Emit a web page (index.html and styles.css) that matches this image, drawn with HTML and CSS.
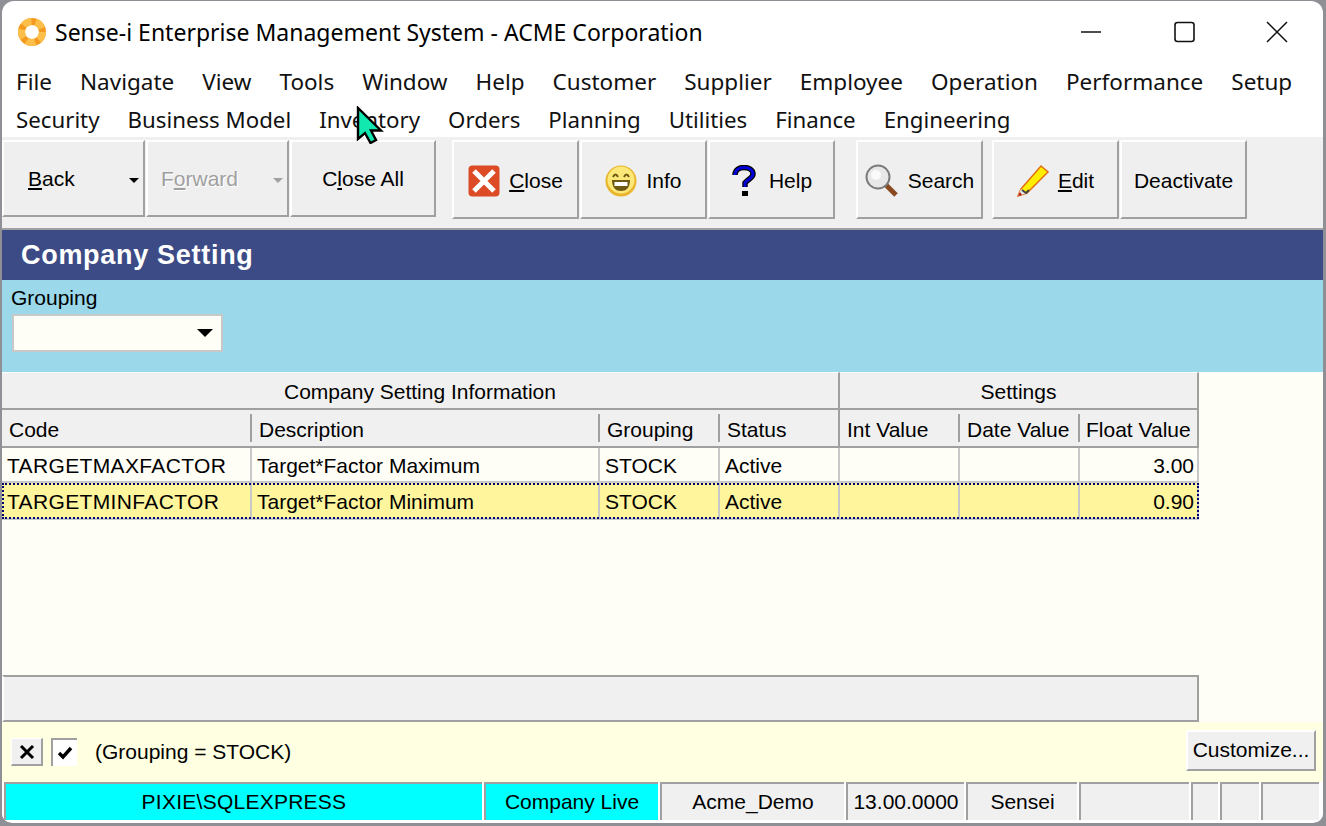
FILE: index.html
```html
<!DOCTYPE html>
<html>
<head>
    <title>Company Setting</title>
    <link rel="stylesheet" href="styles.css">
</head>
<body>
    <div class="window">
        <div class="titlebar">
            <svg class="logo" width="32" height="32" viewBox="0 0 32 32">
                <circle cx="16" cy="16" r="10.5" fill="none" stroke="#f39a1f" stroke-width="7"/>
                <circle cx="16" cy="16" r="10.5" fill="none" stroke="#fcc04a" stroke-width="7" stroke-dasharray="9 4.2"/>
            </svg>
            <span class="title">Sense-i Enterprise Management System - ACME Corporation</span>
            <div class="winbtns">
                <svg width="24" height="24" viewBox="0 0 24 24"><path d="M2 12H22" stroke="#111" stroke-width="1.5"/></svg>
                <svg width="24" height="24" viewBox="0 0 24 24"><rect x="3" y="2.5" width="19" height="19" rx="2.5" fill="none" stroke="#111" stroke-width="1.6"/></svg>
                <svg width="24" height="24" viewBox="0 0 24 24"><path d="M2 2L22 22M22 2L2 22" stroke="#111" stroke-width="1.5"/></svg>
            </div>
        </div>

        <div class="menubar">
            <div class="menurow">
                <span>File</span><span>Navigate</span><span>View</span><span>Tools</span><span>Window</span><span>Help</span><span>Customer</span><span>Supplier</span><span>Employee</span><span>Operation</span><span>Performance</span><span>Setup</span>
            </div>
            <div class="menurow menurow-two">
                <span>Security</span><span>Business Model</span><span>Inventory</span><span>Orders</span><span>Planning</span><span>Utilities</span><span>Finance</span><span>Engineering</span>
            </div>
        </div>

        <div class="toolbar">
            <div class="tbgroup tbgroup-nav">
                <div class="tbbtn drop"><span><u>B</u>ack</span><i class="arrow"></i></div>
                <div class="tbbtn drop disabled"><span>F<u>o</u>rward</span><i class="arrow"></i></div>
                <div class="tbbtn closeall"><span>C<u>l</u>ose All</span></div>
            </div>
            <div class="tbgroup tbgroup-a">
                <div class="tbbtn">
                    <svg width="32" height="32" viewBox="0 0 32 32">
                        <rect x="0.5" y="0.5" width="31" height="31" rx="4" fill="#dd4a26"/>
                        <path d="M6 6L26 26M26 6L6 26" stroke="#fff" stroke-width="5"/>
                    </svg>
                    <span><u>C</u>lose</span>
                </div>
                <div class="tbbtn">
                    <svg width="32" height="32" viewBox="0 0 32 32">
                        <circle cx="16" cy="16" r="15.5" fill="#e8b52c"/>
                        <circle cx="16" cy="15" r="13.5" fill="#fbe878"/>
                        <path d="M8 12Q10.5 7 13 12M19 12Q21.5 7 24 12" fill="none" stroke="#6e5a12" stroke-width="2"/>
                        <path d="M7 15H25C25 23 21 26 16 26C11 26 7 23 7 15Z" fill="#6e5a12"/>
                        <path d="M9.5 17H22.5V21H9.5Z" fill="#fff"/>
                    </svg>
                    <span>Info</span>
                </div>
                <div class="tbbtn">
                    <svg width="29" height="32" viewBox="0 0 29 32">
                        <path d="M4 10C4 5 8 2.5 13 2.5C18 2.5 22 5 22 9C22 13 17 14 14 18V22" fill="none" stroke="#000" stroke-width="5.5"/>
                        <path d="M4 10C4 5 8 2.5 13 2.5C18 2.5 22 5 22 9C22 13 17 14 14 18V22" fill="none" stroke="#0000d8" stroke-width="3"/>
                        <rect x="11" y="26" width="6" height="5" fill="#000"/>
                    </svg>
                    <span>Help</span>
                </div>
            </div>
            <div class="tbgroup tbgroup-b">
                <div class="tbbtn">
                    <svg width="34" height="34" viewBox="0 0 34 34">
                        <path d="M21 21L31 31" stroke="#8a4a20" stroke-width="5"/>
                        <circle cx="13" cy="13" r="11.5" fill="#e8e8e8" stroke="#7c7c7c" stroke-width="2"/>
                        <circle cx="11" cy="11" r="5" fill="#fafafa"/>
                    </svg>
                    <span>Search</span>
                </div>
            </div>
            <div class="tbgroup tbgroup-c">
                <div class="tbbtn">
                    <svg width="32" height="34" viewBox="0 0 32 34">
                        <path d="M1 32L4 25L24 2L31 8L10 29Z" fill="#ffee00" stroke="#e07010" stroke-width="1.5"/>
                        <path d="M1 32L4 25L10 29Z" fill="#e8e8e8"/>
                        <path d="M1 32L3 28L5 31Z" fill="#b01010"/>
                        <path d="M5 26L9 29L12 26" fill="none" stroke="#444" stroke-width="2"/>
                    </svg>
                    <span><u>E</u>dit</span>
                </div>
                <div class="tbbtn"><span>Deactivate</span></div>
            </div>
        </div>

        <div class="heading">Company Setting</div>

        <div class="filter">
            <label class="filter-label">Grouping</label>
            <div class="combo"><i class="arrow big"></i></div>
        </div>

        <div class="content">
            <div class="grid">
                <div class="bands">
                    <div class="band band-info">Company Setting Information</div>
                    <div class="band">Settings</div>
                </div>
                <div class="row head">
                    <div class="cell">Code</div>
                    <div class="cell">Description</div>
                    <div class="cell">Grouping</div>
                    <div class="cell group-end">Status</div>
                    <div class="cell">Int Value</div>
                    <div class="cell">Date Value</div>
                    <div class="cell group-end last">Float Value</div>
                </div>
                <div class="row">
                    <div class="cell code">TARGETMAXFACTOR</div>
                    <div class="cell">Target*Factor Maximum</div>
                    <div class="cell">STOCK</div>
                    <div class="cell">Active</div>
                    <div class="cell"></div>
                    <div class="cell"></div>
                    <div class="cell num">3.00</div>
                </div>
                <div class="row selected">
                    <div class="cell code">TARGETMINFACTOR</div>
                    <div class="cell">Target*Factor Minimum</div>
                    <div class="cell">STOCK</div>
                    <div class="cell">Active</div>
                    <div class="cell"></div>
                    <div class="cell"></div>
                    <div class="cell num">0.90</div>
                </div>
            </div>
            <div class="gridfoot"></div>
        </div>

        <div class="filterbar">
            <div class="chip chip-x">
                <svg width="16" height="14" viewBox="0 0 16 14"><path d="M2 1L14 13M14 1L2 13" stroke="#000" stroke-width="3"/></svg>
            </div>
            <div class="chip chip-check">
                <svg width="16" height="14" viewBox="0 0 16 14"><path d="M2 7L6 11L14 2" fill="none" stroke="#000" stroke-width="3.4"/></svg>
            </div>
            <span class="filtertext">(Grouping = STOCK)</span>
            <div class="customize">Customize...</div>
        </div>

        <div class="statusbar">
            <div class="stat cyan s1">PIXIE\SQLEXPRESS</div>
            <div class="stat cyan s2">Company Live</div>
            <div class="stat s3">Acme_Demo</div>
            <div class="stat s4">13.00.0000</div>
            <div class="stat s5">Sensei</div>
            <div class="stat s6"></div>
            <div class="stat s7"></div>
            <div class="stat s8"></div>
            <div class="stat s9"></div>
        </div>
    </div>

    <svg class="cursor" width="28" height="38" viewBox="0 0 28 38">
        <path d="M2 2V33L9 27L14.5 37L20 34L15 24.5H25Z" fill="#10e8b0" stroke="#000" stroke-width="2.4"/>
    </svg>
</body>
</html>
```

FILE: styles.css
```css
html, body { margin: 0; height: 100%; overflow: hidden; }
body { background: #8f9096; font-family: "Liberation Sans", Arial, sans-serif; font-size: 21px; color: #000; position: relative; }

.window { margin: 1px 0 0 2px; width: 1321px; height: 822px; background: #fff; border-radius: 12px 12px 10px 10px; overflow: hidden; display: flex; flex-direction: column; }

.titlebar { height: 61px; flex: none; display: flex; align-items: center; padding-left: 14px; box-sizing: border-box; }
.logo { margin-right: 7px; }
.title { font-family: "Noto Sans", sans-serif; font-size: 23px; color: #000; }
.winbtns { margin-left: auto; display: flex; gap: 69px; padding-right: 34px; }

.menubar { height: 75px; flex: none; font-family: "Noto Sans", sans-serif; font-size: 22.5px; color: #111; padding-left: 14px; }
.menurow { height: 38px; display: flex; gap: 28px; align-items: center; }
.menurow-two { font-size: 22.25px; }

.toolbar { height: 93px; flex: none; box-sizing: border-box; background: #f0f0f0; border-bottom: 2px solid #a0a0a0; padding-top: 3px; display: flex; align-items: flex-start; }
.tbgroup { display: flex; gap: 1px; }
.tbgroup-nav { height: 77px; }
.tbgroup-a { height: 79px; margin-left: 16px; }
.tbgroup-b { height: 79px; margin-left: 21px; }
.tbgroup-c { height: 79px; margin-left: 9px; }
.tbbtn { width: 127px; box-sizing: border-box; background: #efefef; border-top: 2px solid #fff; border-left: 2px solid #fff; border-right: 2px solid #a0a0a0; border-bottom: 2px solid #a0a0a0; display: flex; align-items: center; justify-content: center; gap: 9px; padding-top: 2px; }
.tbbtn.drop { width: 143px; justify-content: flex-start; padding-left: 24px; padding-top: 1px; position: relative; }
.tbbtn.closeall { width: 146px; padding-top: 1px; }
.disabled { color: #a0a0a0; text-shadow: 1px 1px 0 #fff; padding-left: 13px !important; }
.drop .arrow { position: absolute; right: 4px; top: 36px; border-left-width: 5px; border-right-width: 5px; border-top-width: 5px; }
.disabled .arrow { border-top-color: #a0a0a0; }
.arrow { display: block; width: 0; height: 0; border-left: 6px solid transparent; border-right: 6px solid transparent; border-top: 6px solid #000; }
.arrow.big { border-left-width: 8px; border-right-width: 8px; border-top-width: 8px; }

.heading { height: 50px; flex: none; background: #3c4b85; color: #fff; font-size: 27px; font-weight: bold; line-height: 50px; padding-left: 19px; letter-spacing: 0.7px; }

.filter { height: 92px; flex: none; box-sizing: border-box; background: #9ad8ea; padding: 6px 0 0 9px; }
.filter-label { display: block; height: 28px; line-height: 24px; }
.combo { width: 211px; height: 38px; margin-left: 1px; box-sizing: border-box; border: 2px solid #c8c8c8; background: #fffef6; display: flex; align-items: center; justify-content: flex-end; padding-right: 8px; }

.content { height: 350px; flex: none; background: #fffef6; display: flex; flex-direction: column; justify-content: space-between; }
.grid { width: 1197px; }
.bands { display: flex; height: 38px; }
.band { flex: 1; background: #f0f0f0; border-top: 1px solid #fff; border-bottom: 2px solid #a0a0a0; border-right: 2px solid #a0a0a0; box-sizing: border-box; text-align: center; line-height: 38px; }
.band-info { flex: none; width: 838px; }
.row { display: grid; grid-template-columns: 250px 348px 120px 120px 120px 120px 119px; height: 35px; }
.cell { box-sizing: border-box; border-right: 2px solid #c8c8c8; border-bottom: 2px solid #c8c8c8; padding-left: 5px; line-height: 36px; white-space: nowrap; overflow: hidden; }
.code { letter-spacing: 0.35px; }
.num { text-align: right; padding-right: 3px; }
.row.head { height: 38px; }
.head .cell { border-right: none; border-bottom-color: #a0a0a0; padding-left: 7px; line-height: 40px; background: #f0f0f0 linear-gradient(#a0a0a0, #a0a0a0) no-repeat right 0 top 4px / 2px 28px; }
.head .group-end { border-right: 2px solid #a0a0a0; background: #f0f0f0; }
.head .last { padding-left: 6px; }
.selected { height: 37px; background: #fff59d; position: relative; }
.selected .cell { line-height: 38px; }
.selected::after { content: ""; position: absolute; left: 0; right: 0; top: 0; bottom: 1px; border: 2px dotted #00006e; }

.gridfoot { width: 1197px; height: 47px; box-sizing: border-box; background: #f0f0f0; border: 2px solid #a0a0a0; border-left-color: #fff; }

.filterbar { height: 60px; flex: none; box-sizing: border-box; background: #ffffe1; display: flex; align-items: center; padding-left: 9px; padding-right: 7px; }
.chip { height: 28px; box-sizing: border-box; display: flex; align-items: center; justify-content: center; }
.chip-x { width: 32px; background: #f0f0f0; border-right: 2px solid #a0a0a0; border-bottom: 2px solid #a0a0a0; border-top: 1px solid #fff; border-left: 1px solid #fff; }
.chip-check { width: 26px; margin-left: 8px; background: #fff; border-left: 2px solid #a0a0a0; border-top: 2px solid #a0a0a0; }
.filtertext { margin-left: 18px; }
.customize { margin-left: auto; margin-top: -4px; width: 130px; height: 41px; box-sizing: border-box; background: #f0f0f0; border-top: 2px solid #fff; border-left: 2px solid #fff; border-right: 2px solid #a0a0a0; border-bottom: 2px solid #a0a0a0; text-align: center; line-height: 35px; }

.statusbar { height: 40px; flex: none; display: flex; gap: 2px; box-sizing: border-box; padding: 0 0 2px 2px; background: #fff; }
.stat { box-sizing: border-box; background: #f0f0f0; border-top: 2px solid #a0a0a0; border-left: 2px solid #a0a0a0; text-align: center; line-height: 36px; white-space: nowrap; }
.cyan { background: #00ffff; }
.s1 { width: 478px; letter-spacing: 0.25px; }
.s2 { width: 174px; }
.s3 { width: 184px; }
.s4 { width: 118px; }
.s5 { width: 111px; }
.s6 { width: 110px; }
.s7 { width: 27px; }
.s8 { width: 39px; }
.s9 { width: 58px; }

.cursor { position: absolute; left: 356px; top: 106px; }
```
